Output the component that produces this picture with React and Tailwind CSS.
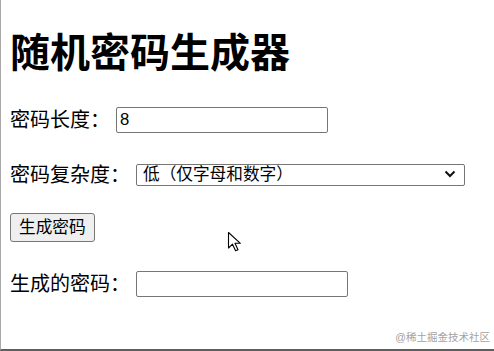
import React, { useState } from "react";

const font = { fontFamily: '"Liberation Sans", "Microsoft YaHei", "Noto Sans CJK SC", sans-serif' };

export default function App() {
  const [length, setLength] = useState("8");
  const [level, setLevel] = useState("low");
  const [password, setPassword] = useState("");

  return (
    <div
      style={font}
      className="relative h-[351px] w-[494px] overflow-hidden border-l border-b-2 border-l-[#a8a8a8] border-b-[#5f5f5f] bg-white pl-[9px] pr-[10px] text-black"
    >
      <h1 className="mt-[29px] h-[48px] text-[40px] font-bold leading-[48px]">随机密码生成器</h1>

      <div className="mt-[30px] flex h-[26px] items-center gap-[6px]">
        <label className="text-[20px] leading-[26px]">密码长度：</label>
        <input
          value={length}
          onChange={(e) => setLength(e.target.value)}
          className="h-[26px] w-[212px] rounded-[2px] border border-[#767676] px-[3px] text-[16.67px] outline-none"
        />
      </div>

      <div className="mt-[29px] flex h-[26px] items-center gap-[6px]">
        <label className="text-[20px] leading-[26px]">密码复杂度：</label>
        <div className="relative">
          <select
            value={level}
            onChange={(e) => setLevel(e.target.value)}
            className="h-[22px] w-[329px] appearance-none rounded-[2px] border border-[#767676] bg-white pl-[6px] text-[16.67px] leading-[20px] outline-none"
          >
            <option value="low">低（仅字母和数字）</option>
            <option value="mid">中（字母、数字和符号）</option>
            <option value="high">高（全部字符）</option>
          </select>
          <svg className="pointer-events-none absolute right-[9px] top-[7px]" width="12" height="8" viewBox="0 0 12 8">
            <path d="M1.5 1.5 L6 6 L10.5 1.5" fill="none" stroke="#111" strokeWidth="2" />
          </svg>
        </div>
      </div>

      <button
        onClick={() => setPassword(Math.random().toString(36).slice(2, 2 + Number(length || 8)))}
        className="mt-[25px] h-[29px] rounded-[3px] border border-[#767676] bg-[#efefef] px-[8px] text-[16.67px] leading-[27px]"
      >
        生成密码
      </button>

      <div className="mt-[29px] flex h-[26px] items-center gap-[6px]">
        <label className="text-[20px] leading-[26px]">生成的密码：</label>
        <input
          value={password}
          readOnly
          className="h-[26px] w-[212px] rounded-[2px] border border-[#767676] px-[3px] text-[16.67px] outline-none"
        />
      </div>

      <svg className="absolute left-[226px] top-[231px]" width="16" height="22" viewBox="0 0 16 22">
        <path d="M1.5 1.5 L1.5 17 L5.5 13.2 L8.6 19.8 L11 18.7 L8 12.3 L13.4 12.3 Z" fill="#fff" stroke="#000" strokeWidth="1.1" strokeLinejoin="round" />
      </svg>

      <span className="absolute bottom-[3px] right-[4px] text-[10.5px] text-[#a3a3a3]">@稀土掘金技术社区</span>
    </div>
  );
}
